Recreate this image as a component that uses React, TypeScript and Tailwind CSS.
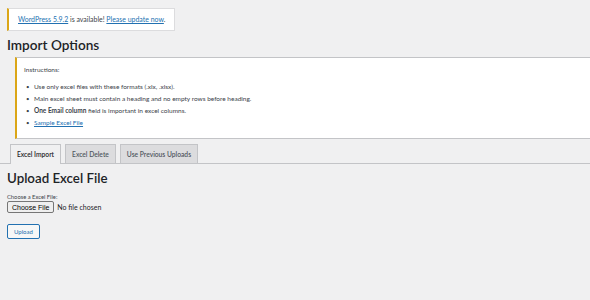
import React from "react";

export default function App() {
  const font = { fontFamily: "Lato, 'Noto Sans', sans-serif" };
  return (
    <div className="w-[590px] h-[300px] bg-[#f0f0f1] text-[#3c434a] overflow-hidden" style={font}>
      <div className="pt-[8px] flex">
        <div className="ml-[7px] flex items-center h-[23px] bg-white border border-[#dcdcde] border-l-2 border-l-[#dba617] pl-[9px] pr-[8px] text-[6.95px] leading-none">
          <a className="text-[#2271b1] underline">WordPress 5.9.2</a>
          <span>&nbsp;is available!&nbsp;</span>
          <a className="text-[#2271b1] underline">Please update now</a>
          <span>.</span>
        </div>
      </div>
      <h1 className="ml-[7px] mt-[5px] h-[18px] text-[13.6px] leading-[18px] font-semibold text-[#1d2327]">Import Options</h1>
      <div className="ml-[15px] mt-[3px] w-[600px] h-[82px] bg-white border-y border-[#c3c4c7] border-l-2 border-l-[#dba617] pl-[7px] pt-[8px] text-[6.5px] leading-none">
        <div className="h-[8px] flex items-center">Instructions:</div>
        <ul className="mt-[9px] flex flex-col gap-[4px]">
          {[
            <span key="a">Use only excel files with these formats (.xlx, .xlsx).</span>,
            <span key="b">Main excel sheet must contain a heading and no empty rows before heading.</span>,
            <span key="c"><b className="font-bold">One Email column</b> field is important in excel columns.</span>,
            <a key="d" className="text-[#2271b1] underline">Sample Excel File</a>,
          ].map((c, i) => (
            <li key={i} className="h-[8px] flex items-center">
              <span className="w-[10px] pl-[2px] text-[6px]">•</span>
              {c}
            </li>
          ))}
        </ul>
      </div>
      <div className="mt-[6px] flex items-end h-[19px] border-b border-[#c3c4c7] pl-[10px] gap-[4px] text-[6.7px] font-semibold leading-none">
        <div className="h-[20px] -mb-px px-[6px] flex items-center bg-[#f0f0f1] border border-b-0 border-[#c3c4c7] text-[#1d2327]">Excel Import</div>
        <div className="h-[19px] px-[6px] flex items-center bg-[#dcdcde] border border-[#c3c4c7] border-b-0 text-[#50575e]">Excel Delete</div>
        <div className="h-[19px] px-[6px] flex items-center bg-[#dcdcde] border border-[#c3c4c7] border-b-0 text-[#50575e]">Use Previous Uploads</div>
      </div>
      <h2 className="ml-[7px] mt-[5px] h-[18px] text-[13.3px] leading-[18px] font-semibold text-[#1d2327]">Upload Excel File</h2>
      <div className="ml-[7px] mt-[7px] text-[5.8px] leading-none h-[6px]">Choose a Excel File:</div>
      <div className="ml-[7px] mt-[1px] flex items-center gap-[3px] text-[7px] leading-none">
        <button className="h-[12px] px-[4px] bg-[#efefef] border border-[#767676] rounded-[2px] text-[#000]" style={{ fontFamily: "'Liberation Sans', Arial, sans-serif" }}>Choose File</button>
        <span className="text-[#1d2327]">No file chosen</span>
      </div>
      <button className="ml-[7px] mt-[11px] h-[15px] px-[6px] bg-[#f6f7f7] border border-[#2271b1] rounded-[2px] text-[#2271b1] text-[6px] leading-none">Upload</button>
    </div>
  );
}
